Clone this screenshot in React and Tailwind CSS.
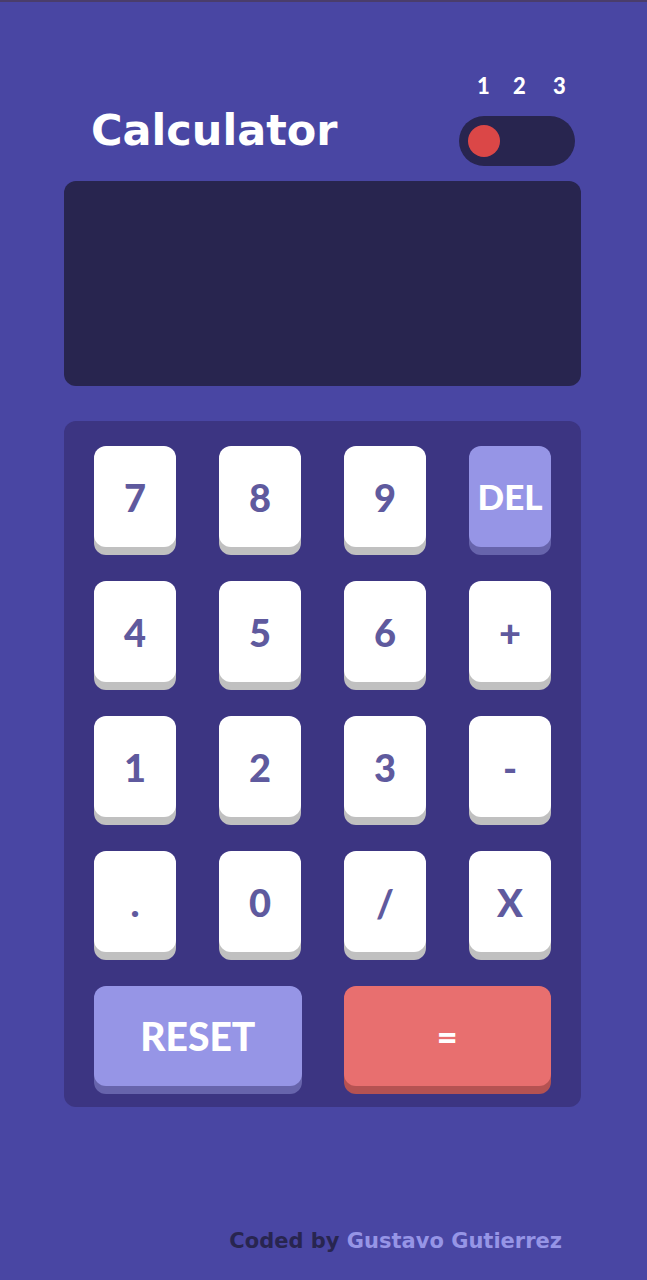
import React from 'react'

const keys = ['7', '8', '9', 'DEL', '4', '5', '6', '+', '1', '2', '3', '-', '.', '0', '/', 'X']

const Key = ({label}) => {
    const isDel = label === 'DEL';
    return (
        <button
            className={`h-[101px] rounded-[12px] flex items-center justify-center
            ${isDel
                ? 'bg-[#9695e6] text-white shadow-[0_8px_0_#6764ac] text-[35px]'
                : 'bg-white text-[#5f5a9e] shadow-[0_8px_0_#c0c0c0] text-[38px]'}`}
        >
            <span className="font-black leading-none">{label}</span>
        </button>
    )
}

const App = () => {
    return (
        <div className="min-h-[1280px] w-full bg-[#4946a3] border-t-2 border-[#4a3d6b]" style={{fontFamily: 'Lato, "Open Sans", sans-serif'}}>
            <div className="w-[517px] ml-[64px] pt-[73px]">
                {/* Header */}
                <div className="flex items-end justify-between pl-[27px] pr-[6px]">
                    <h1 className="text-[43px] font-bold text-white leading-none mb-[14px]" style={{fontFamily: '"DejaVu Sans", sans-serif'}}>Calculator</h1>
                    <div className="flex flex-col items-center">
                        <div className="relative w-[116px] h-[22px] text-white text-[22px] font-black leading-none mb-[19px]">
                            <span className="absolute left-[18px] top-0">1</span>
                            <span className="absolute left-[54px] top-0">2</span>
                            <span className="absolute left-[94px] top-0">3</span>
                        </div>
                        <div className="w-[116px] h-[50px] rounded-full bg-[#28254f] flex items-center pl-[9px]">
                            <div className="w-[32px] h-[32px] rounded-full bg-[#db4747]"></div>
                        </div>
                    </div>
                </div>

                {/* Display */}
                <div className="mt-[15px] h-[205px] rounded-[12px] bg-[#28254f]"></div>

                {/* Keypad */}
                <div className="mt-[35px] rounded-[12px] bg-[#3c3582] px-[30px] pt-[25px] pb-[21px]">
                    <div className="grid grid-cols-4 gap-x-[43px] gap-y-[34px]">
                        {keys.map((k) => <Key key={k} label={k} />)}
                    </div>
                    <div className="grid grid-cols-2 gap-x-[42px] mt-[34px]">
                        <button className="h-[100px] rounded-[12px] bg-[#9695e6] shadow-[0_8px_0_#6764ac] text-white text-[39px] font-black flex items-center justify-center">
                            RESET
                        </button>
                        <button className="h-[100px] rounded-[12px] bg-[#e86f6f] shadow-[0_8px_0_#b55252] text-white text-[36px] font-black flex items-center justify-center">
                            =
                        </button>
                    </div>
                </div>

                {/* Footer */}
                <p className="mt-[119px] text-right pr-[19px] text-[21px] font-bold" style={{fontFamily: '"DejaVu Sans", sans-serif'}}>
                    <span className="text-[#28254f]">Coded by </span>
                    <span className="text-[#9695e6]">Gustavo Gutierrez</span>
                </p>
            </div>
        </div>
    )
}
export default App
